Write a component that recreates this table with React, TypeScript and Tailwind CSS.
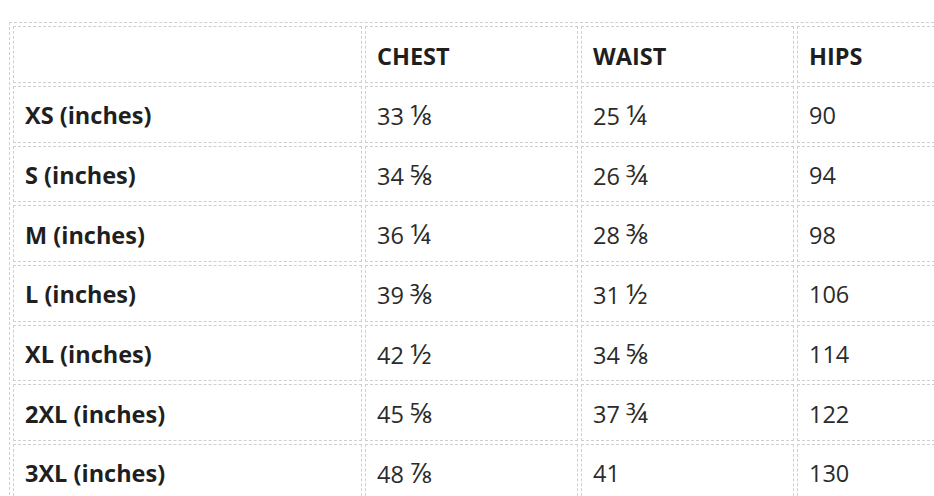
const headers = ['CHEST', 'WAIST', 'HIPS'];

const rows: [string, string, string, string][] = [
  ['XS (inches)', '33 ⅛', '25 ¼', '90'],
  ['S (inches)', '34 ⅝', '26 ¾', '94'],
  ['M (inches)', '36 ¼', '28 ⅜', '98'],
  ['L (inches)', '39 ⅜', '31 ½', '106'],
  ['XL (inches)', '42 ½', '34 ⅝', '114'],
  ['2XL (inches)', '45 ⅝', '37 ¾', '122'],
  ['3XL (inches)', '48 ⅞', '41', '130'],
];

const cell =
  'border border-dashed border-[#cfcfcf] px-[11px] pb-0 pt-[2px] text-left align-middle';

// split "33 ⅛" so the fraction glyph can be drawn a bit larger
const Measure = ({ value }: { value: string }) => {
  const [whole, frac] = value.split(' ');
  return (
    <>
      {whole}
      {frac && (
        <>
          {' '}
          <span className="text-[28px] leading-none">{frac}</span>
        </>
      )}
    </>
  );
};

export default function App() {
  return (
    <div
      className="h-[496px] w-[934px] overflow-hidden bg-white pl-[9px] pt-[22px]"
      style={{ fontFamily: '"Open Sans", "Noto Sans", sans-serif' }}
    >
      <table className="w-[1005px] min-w-[1005px] table-fixed border-separate border-spacing-[3px] border border-dashed border-[#cfcfcf] text-[23.5px] leading-[30px] text-[#2b2b2b]">
        <colgroup>
          <col className="w-[349px]" />
          <col className="w-[213px]" />
          <col className="w-[213px]" />
          <col className="w-[213px]" />
        </colgroup>
        <thead>
          <tr className="h-[57px]">
            <th className={`${cell} font-bold text-[#1f1f1f]`}></th>
            {headers.map((h) => (
              <th key={h} className={`${cell} font-bold text-[#1f1f1f]`}>
                {h}
              </th>
            ))}
          </tr>
        </thead>
        <tbody>
          {rows.map((r) => (
            <tr key={r[0]} className="h-[56.7px]">
              <td className={`${cell} font-bold text-[#1f1f1f]`}>{r[0]}</td>
              <td className={cell}>
                <Measure value={r[1]} />
              </td>
              <td className={cell}>
                <Measure value={r[2]} />
              </td>
              <td className={cell}>{r[3]}</td>
            </tr>
          ))}
        </tbody>
      </table>
    </div>
  );
}
